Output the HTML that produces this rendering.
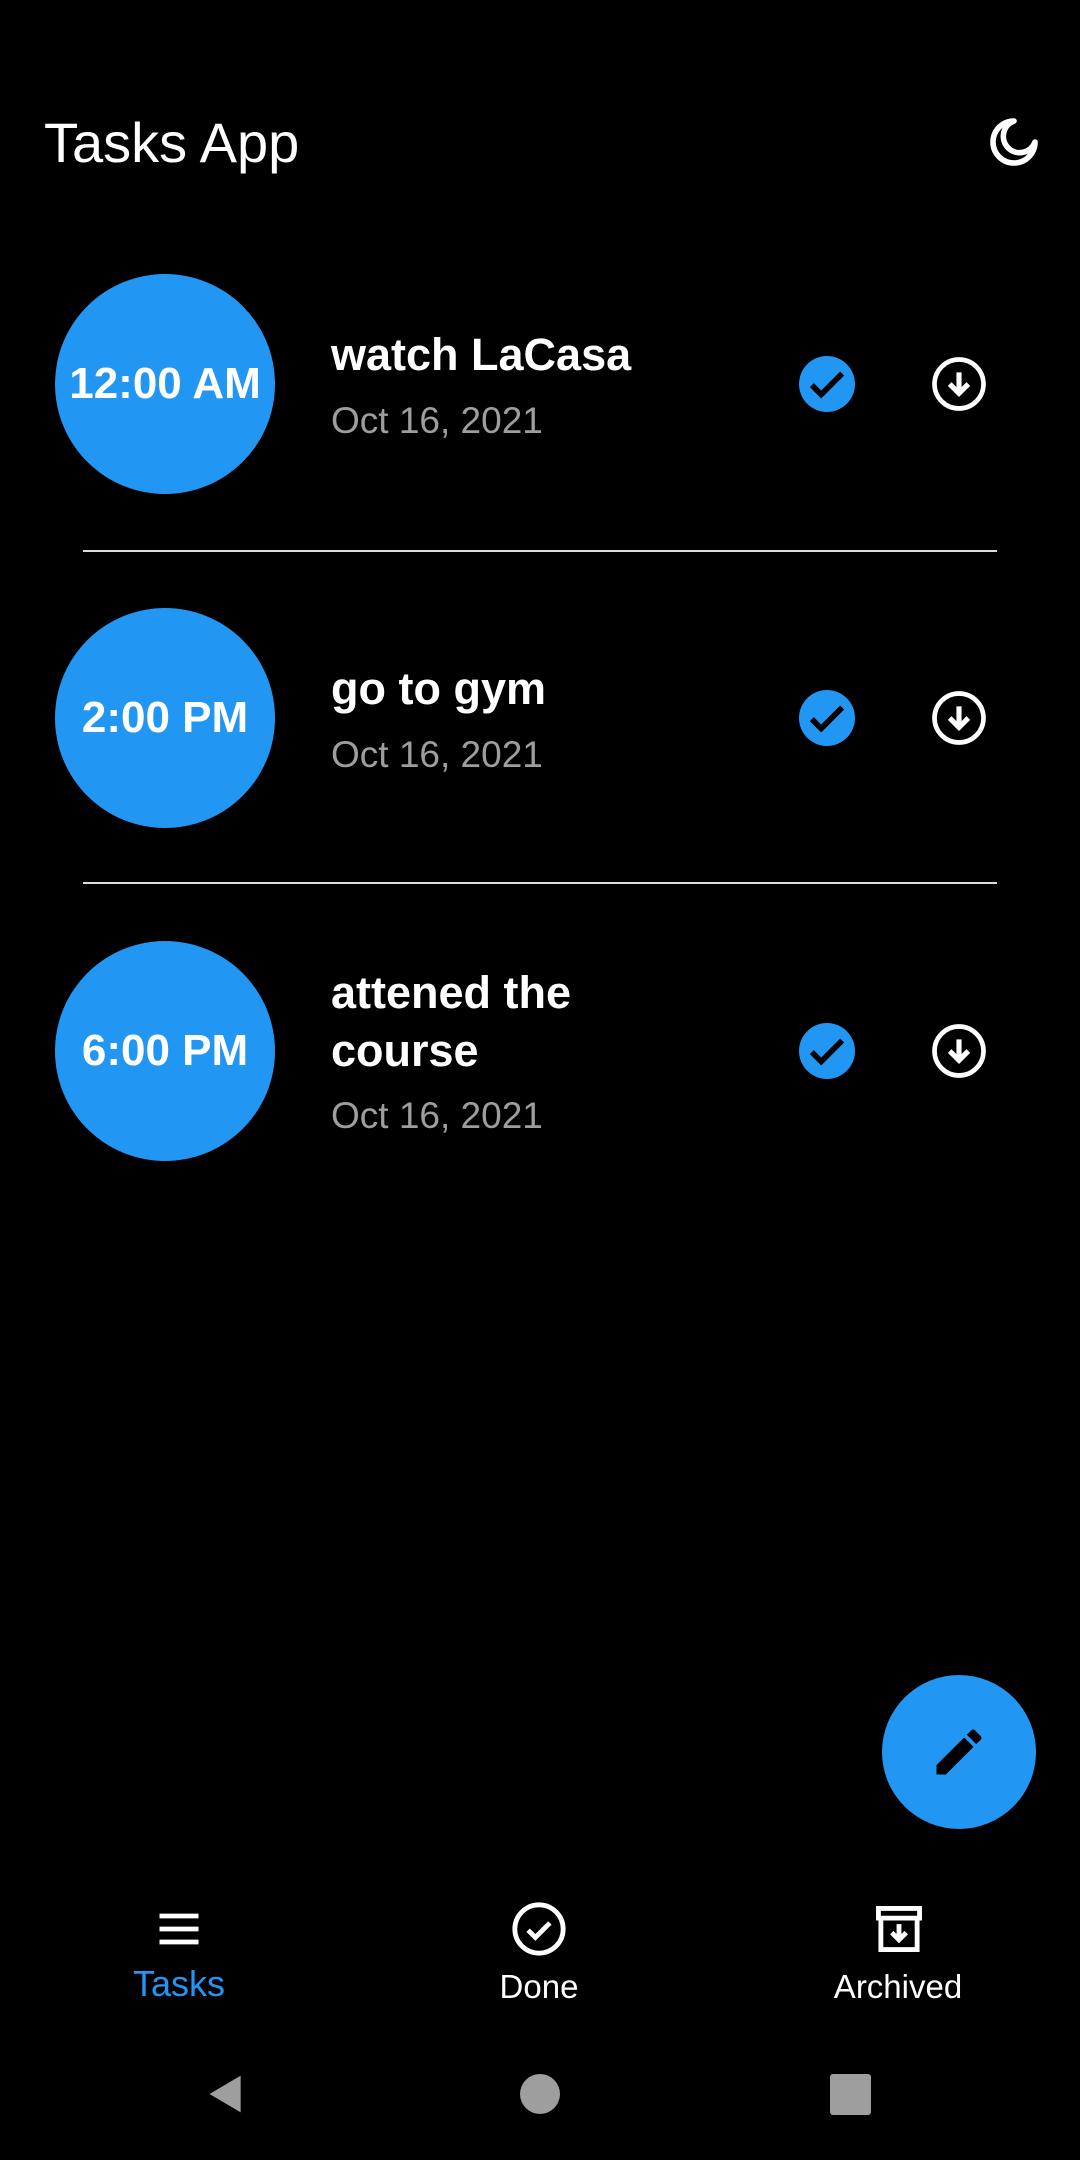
<!DOCTYPE html>
<html><head><meta charset="utf-8"><style>
*{margin:0;padding:0;box-sizing:border-box}
body{width:1080px;height:2160px;background:#000;position:relative;overflow:hidden;font-family:"Liberation Sans",sans-serif;color:#fff}
.abs{position:absolute}
.title{left:44px;top:110px;font-size:56px}
.circle{position:absolute;left:55px;width:220px;height:220px;border-radius:50%;background:#2196f3;display:flex;align-items:center;justify-content:center;font-weight:bold;font-size:44px}
.t{position:absolute;left:331px;font-weight:bold;font-size:45px;line-height:58px}
.d{position:absolute;left:331px;font-size:37px;color:#9e9e9e}
.div{position:absolute;left:83px;width:914px;height:2px;background:#ddd}
.ic{position:absolute}
.nl{position:absolute;font-size:33px;transform:translateX(-50%)}
</style></head><body>
<div class="abs title">Tasks App</div>
<svg class="ic" style="left:986px;top:114px" width="56" height="56" viewBox="0 0 24 24"><path d="M12 3a9 9 0 1 0 9 9 7 7 0 1 1-9-9z" fill="none" stroke="#fff" stroke-width="2.4" stroke-linejoin="round"/></svg>

<div class="circle" style="top:274px">12:00 AM</div>
<div class="t" style="top:326px">watch LaCasa</div>
<div class="d" style="top:400px">Oct 16, 2021</div>
<div class="div" style="top:550px"></div>

<div class="circle" style="top:608px">2:00 PM</div>
<div class="t" style="top:660px">go to gym</div>
<div class="d" style="top:734px">Oct 16, 2021</div>
<div class="div" style="top:882px"></div>

<div class="circle" style="top:941px">6:00 PM</div>
<div class="t" style="top:964px">attened the<br>course</div>
<div class="d" style="top:1095px">Oct 16, 2021</div>

<svg class="ic" style="left:799px;top:356px" width="56" height="56" viewBox="0 0 24 24"><circle cx="12" cy="12" r="12" fill="#2196f3"/><path d="M5.5 12.5l4 4 9-9" fill="none" stroke="#000" stroke-width="2.4"/></svg>
<svg class="ic" style="left:931px;top:356px" width="56" height="56" viewBox="0 0 24 24"><circle cx="12" cy="12" r="10.5" fill="none" stroke="#fff" stroke-width="2"/><path d="M12 7v8M8 12l4 4 4-4" fill="none" stroke="#fff" stroke-width="2.2"/></svg>
<svg class="ic" style="left:799px;top:690px" width="56" height="56" viewBox="0 0 24 24"><circle cx="12" cy="12" r="12" fill="#2196f3"/><path d="M5.5 12.5l4 4 9-9" fill="none" stroke="#000" stroke-width="2.4"/></svg>
<svg class="ic" style="left:931px;top:690px" width="56" height="56" viewBox="0 0 24 24"><circle cx="12" cy="12" r="10.5" fill="none" stroke="#fff" stroke-width="2"/><path d="M12 7v8M8 12l4 4 4-4" fill="none" stroke="#fff" stroke-width="2.2"/></svg>
<svg class="ic" style="left:799px;top:1023px" width="56" height="56" viewBox="0 0 24 24"><circle cx="12" cy="12" r="12" fill="#2196f3"/><path d="M5.5 12.5l4 4 9-9" fill="none" stroke="#000" stroke-width="2.4"/></svg>
<svg class="ic" style="left:931px;top:1023px" width="56" height="56" viewBox="0 0 24 24"><circle cx="12" cy="12" r="10.5" fill="none" stroke="#fff" stroke-width="2"/><path d="M12 7v8M8 12l4 4 4-4" fill="none" stroke="#fff" stroke-width="2.2"/></svg>

<div class="abs" style="left:882px;top:1675px;width:154px;height:154px;border-radius:50%;background:#2196f3"></div>
<svg class="ic" style="left:929px;top:1722px" width="60" height="60" viewBox="0 0 24 24"><path d="M3 17.25V21h3.75L17.81 9.94l-3.75-3.75L3 17.25zM20.71 7.04a1 1 0 0 0 0-1.41l-2.34-2.34a1 1 0 0 0-1.41 0l-1.83 1.83 3.75 3.75 1.83-1.83z" fill="#000"/></svg>

<svg class="ic" style="left:153px;top:1903px" width="52" height="52" viewBox="0 0 24 24"><path d="M3 6h18M3 12h18M3 18h18" stroke="#fff" stroke-width="2.2"/></svg>
<div class="nl" style="left:179px;top:1963px;color:#2196f3;font-size:36px">Tasks</div>
<svg class="ic" style="left:510px;top:1900px" width="58" height="58" viewBox="0 0 24 24"><circle cx="12" cy="12" r="10" fill="none" stroke="#fff" stroke-width="2"/><path d="M7.5 12.5l3 3 6-6" fill="none" stroke="#fff" stroke-width="2"/></svg>
<div class="nl" style="left:539px;top:1968px">Done</div>
<svg class="ic" style="left:870px;top:1900px" width="58" height="58" viewBox="0 0 24 24"><path d="M3.5 3.5h17v4h-17zM4.5 7.5v13h15v-13" fill="none" stroke="#fff" stroke-width="2"/><path d="M12 10v6M9 13.5l3 3 3-3" fill="none" stroke="#fff" stroke-width="2"/></svg>
<div class="nl" style="left:898px;top:1968px">Archived</div>

<svg class="ic" style="left:204px;top:2072px" width="44" height="44" viewBox="0 0 24 24"><path d="M20 2v20L3 12z" fill="#9e9e9e"/></svg>
<div class="abs" style="left:520px;top:2074px;width:40px;height:40px;border-radius:50%;background:#9e9e9e"></div>
<div class="abs" style="left:830px;top:2074px;width:41px;height:41px;border-radius:3px;background:#9e9e9e"></div>
</body></html>
